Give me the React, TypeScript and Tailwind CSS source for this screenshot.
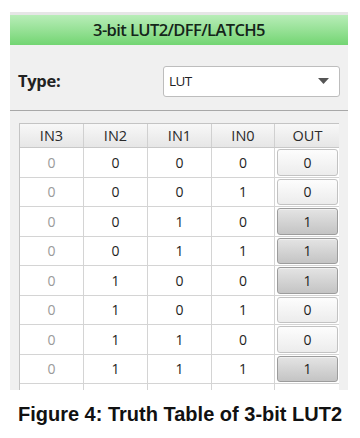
import React from "react";

const rows: [number, number, number, number, number][] = [
  [0, 0, 0, 0, 0],
  [0, 0, 0, 1, 0],
  [0, 0, 1, 0, 1],
  [0, 0, 1, 1, 1],
  [0, 1, 0, 0, 1],
  [0, 1, 0, 1, 0],
  [0, 1, 1, 0, 0],
  [0, 1, 1, 1, 1],
];

const cols = "grid grid-cols-[64px_64px_64px_63px_65px]";

export default function App() {
  return (
    <div className="w-[360px] h-[438px] bg-white relative overflow-hidden" style={{ fontFamily: "'Open Sans', 'Liberation Sans', sans-serif" }}>
      <div className="ml-[10px] mt-[12px] w-[338px] h-[378px] bg-[#f0f0f0] overflow-hidden flex flex-col">
        <div className="h-[3px] shrink-0 bg-[#e6e6e6]" />
        <div className="h-[30px] shrink-0 bg-gradient-to-b from-[#b8edb8] to-[#72d572] flex items-center justify-center text-[16.5px] font-semibold text-[#15251a] tracking-[-0.6px]">
          3-bit LUT2/DFF/LATCH5
        </div>
        <div className="h-[65px] shrink-0 flex items-center pt-[7px]">
          <span className="ml-[8px] w-[145px] text-[16.5px] font-bold text-[#222] tracking-[-0.3px]">Type:</span>
          <div className="w-[177px] h-[31px] bg-white border border-[#bdbdbd] rounded-[3px] flex items-center justify-between pl-[5px] pr-[10px]">
            <span className="text-[13.5px] text-[#222] tracking-[-0.6px]">LUT</span>
            <svg width="11" height="6" viewBox="0 0 11 6"><path d="M0 0 H11 L5.5 6 Z" fill="#555" /></svg>
          </div>
        </div>
        <div className="h-px shrink-0 bg-[#a8a8a8]" />
        <div className="mt-[12px] ml-[9px] w-[320px] border-l border-t border-[#c4c4c4] bg-white">
          <div className={`${cols} h-[24px] bg-gradient-to-b from-[#f8f8f8] to-[#e6e6e6] border-b border-[#c8c8c8]`}>
            {["IN3", "IN2", "IN1", "IN0", "OUT"].map((h, i) => (
              <div key={h} className={`flex items-center justify-center text-[14.5px] text-[#2a2a2a] ${i < 4 ? "border-r border-[#d0d0d0]" : ""}`}>
                {h}
              </div>
            ))}
          </div>
          {rows.map((r, ri) => (
            <div key={ri} className={`${cols} h-[29.5px] border-b border-[#d4d4d4]`}>
              {r.slice(0, 4).map((v, ci) => (
                <div key={ci} className={`flex items-center justify-center text-[14px] border-r border-[#d4d4d4] ${ci === 0 ? "text-[#9a9a9a]" : "text-[#1e1e1e]"}`}>
                  {v}
                </div>
              ))}
              <div className="flex items-center justify-center px-[2px] py-[1px]">
                {r[4] ? (
                  <div className="w-full h-full rounded-[3px] border border-[#9c9c9c] bg-gradient-to-b from-[#e4e4e4] to-[#c4c4c4] flex items-center justify-center text-[14px] text-[#1e1e1e] shadow-[inset_0_1px_0_#f0f0f0]">
                    1
                  </div>
                ) : (
                  <div className="w-full h-full rounded-[3px] border border-[#c2c2c2] bg-gradient-to-b from-[#fdfdfd] to-[#ececec] flex items-center justify-center text-[14px] text-[#1e1e1e]">
                    0
                  </div>
                )}
              </div>
            </div>
          ))}
          <div className={`${cols} h-[29.5px]`}>
            {[0, 1, 2, 3].map((c) => (
              <div key={c} className="border-r border-[#d4d4d4]" />
            ))}
            <div />
          </div>
        </div>
      </div>
      <div className="mt-[9px] text-center text-[20px] leading-[30px] font-bold text-[#111]" style={{ fontFamily: "'Liberation Sans', Arial, sans-serif" }}>
        Figure 4: Truth Table of 3-bit LUT2
      </div>
    </div>
  );
}
